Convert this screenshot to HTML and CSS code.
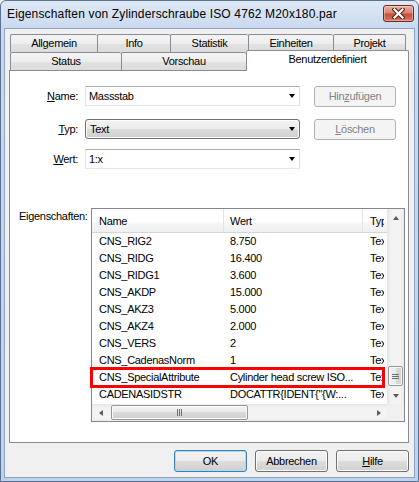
FILE: index.html
```html
<!DOCTYPE html>
<html>
<head>
<meta charset="utf-8">
<link rel="stylesheet" href="styles.css">
</head>
<body>
<div class="window">
  <div class="titlebar">
    <span class="title">Eigenschaften von Zylinderschraube ISO 4762 M20x180.par</span>
    <div class="close">
      <svg width="13" height="11" viewBox="0 0 13 11"><path d="M2.5 1.5 L10.5 9.5 M10.5 1.5 L2.5 9.5" stroke="#5a2318" stroke-width="4.2" stroke-linecap="square"/><path d="M2.5 1.5 L10.5 9.5 M10.5 1.5 L2.5 9.5" stroke="#ffffff" stroke-width="2.2" stroke-linecap="square"/></svg>
    </div>
  </div>
  <div class="client">
    <div class="tabctl">
      <div class="tabrow row1">
        <div class="tab w-allg">Allgemein</div>
        <div class="tab w-info">Info</div>
        <div class="tab w-stat">Statistik</div>
        <div class="tab w-einh">Einheiten</div>
        <div class="tab w-proj last">Projekt</div>
      </div>
      <div class="tabrow row2">
        <div class="tab w-status">Status</div>
        <div class="tab w-vors">Vorschau</div>
        <div class="tab w-ben selected">Benutzerdefiniert</div>
      </div>
      <div class="panel">
        <div class="frow r-name">
          <div class="flabel"><u>N</u>ame:</div>
          <div class="combo edit"><span class="ctext">Massstab</span><i class="arrow"></i></div>
          <div class="btn disabled side">Hin<u>z</u>ufügen</div>
        </div>
        <div class="frow r-typ">
          <div class="flabel"><u>T</u>yp:</div>
          <div class="combo list-style"><span class="ctext">Text</span><i class="arrow"></i></div>
          <div class="btn disabled side"><u>L</u>öschen</div>
        </div>
        <div class="frow r-wert">
          <div class="flabel"><u>W</u>ert:</div>
          <div class="combo edit"><span class="ctext">1:x</span><i class="arrow"></i></div>
        </div>
        <div class="props">
          <div class="plabel">Eigenschaften:</div>
          <div class="list">
            <div class="lmain">
              <div class="lhead">
                <div class="c1">Name</div>
                <div class="c2">Wert</div>
                <div class="c3">Typ</div>
              </div>
              <div class="lrow"><div class="c1">CNS_RIG2</div><div class="c2">8.750</div><div class="c3">Text</div></div>
              <div class="lrow"><div class="c1">CNS_RIDG</div><div class="c2">16.400</div><div class="c3">Text</div></div>
              <div class="lrow"><div class="c1">CNS_RIDG1</div><div class="c2">3.600</div><div class="c3">Text</div></div>
              <div class="lrow"><div class="c1">CNS_AKDP</div><div class="c2">15.000</div><div class="c3">Text</div></div>
              <div class="lrow"><div class="c1">CNS_AKZ3</div><div class="c2">5.000</div><div class="c3">Text</div></div>
              <div class="lrow"><div class="c1">CNS_AKZ4</div><div class="c2">2.000</div><div class="c3">Text</div></div>
              <div class="lrow"><div class="c1">CNS_VERS</div><div class="c2">2</div><div class="c3">Text</div></div>
              <div class="lrow"><div class="c1">CNS_CadenasNorm</div><div class="c2">1</div><div class="c3">Text</div></div>
              <div class="lrow"><div class="c1">CNS_SpecialAttribute</div><div class="c2">Cylinder head screw ISO...</div><div class="c3">Text</div></div>
              <div class="lrow"><div class="c1">CADENASIDSTR</div><div class="c2">DOCATTR{IDENT{"{W:...</div><div class="c3">Text</div></div>
            </div>
            <div class="vscroll">
              <div class="sbtn"><i class="tri up"></i></div>
              <div class="vtrack"><div class="vthumb"><i></i><i></i><i></i></div></div>
              <div class="sbtn"><i class="tri down"></i></div>
            </div>
            <div class="hscroll">
              <div class="sbtn"><i class="tri left"></i></div>
              <div class="htrack"><div class="hthumb"><i></i><i></i><i></i></div></div>
              <div class="sbtn"><i class="tri right"></i></div>
            </div>
            <div class="corner"></div>
            <div class="highlight"></div>
          </div>
        </div>
      </div>
    </div>
    <div class="bottom">
      <div class="btn default">OK</div>
      <div class="btn">Abbrechen</div>
      <div class="btn"><u>H</u>ilfe</div>
    </div>
  </div>
</div>
</body>
</html>
```
FILE: styles.css
```css
* { box-sizing: border-box; }
html, body { margin: 0; padding: 0; }
body {
  width: 419px; height: 482px; overflow: hidden; background: #ffffff;
  font-family: "Liberation Sans", Arial, sans-serif; font-size: 11px;
  letter-spacing: -0.3px; color: #000;
}
u { text-decoration: underline; text-underline-offset: 1px; }

.window {
  width: 419px; height: 482px;
  border: 1px solid #5b7192; border-radius: 6px 6px 0 0;
  background: linear-gradient(#dfe9f6, #c9d9ee 28px, #bfd2eb);
  display: flex; flex-direction: column;
}
.titlebar {
  height: 27px; flex: none;
  display: flex; justify-content: space-between; align-items: flex-start;
  padding: 0 4px 0 6px;
}
.title { font-size: 12px; letter-spacing: 0.15px; line-height: 15px; margin-top: 6px; color: #000; }
.close {
  width: 31px; height: 17px; margin-top: 4px;
  border: 1px solid #6d2a20; border-radius: 3px;
  background: linear-gradient(#eab0a3, #d98470 45%, #c8503a 55%, #d7755c);
  box-shadow: inset 0 0 0 1px rgba(255,255,255,0.35);
  display: flex; align-items: center; justify-content: center;
}
.close svg { display: block; }

.client {
  flex: 1; margin: 0 3px 3px 3px;
  border: 1px solid #8ea3bf; background: #f0f0f0;
  padding: 5px 5px 0 4px;
}
.tabctl { width: 400px; }
.tabrow { display: flex; height: 18px; padding-left: 1px; }
.row2 { align-items: flex-end; }
.tab {
  height: 18px; border: 1px solid #898c95; border-bottom: none; border-right: none;
  border-radius: 2px 2px 0 0;
  background: linear-gradient(#f4f4f4, #ededed 50%, #e2e2e2 50%, #dcdcdc);
  text-align: center; line-height: 17px; white-space: nowrap;
}
.tab.last { border-right: 1px solid #898c95; }
.w-allg { width: 87px; }
.w-info { width: 73px; }
.w-stat { width: 78px; }
.w-einh { width: 85px; }
.w-proj { width: 73px; }
.w-status { width: 111px; }
.w-vors { width: 125px; }
.tab.selected {
  width: 163px; height: 21px; margin-bottom: -1px;
  border-right: 1px solid #898c95; background: #ffffff;
  position: relative; z-index: 2; line-height: 17px;
}
.panel {
  height: 373px; border: 1px solid #898c95; background: #ffffff;
}

.frow { display: flex; align-items: flex-start; height: 20px; }
.r-name { margin-top: 15px; }
.r-typ { margin-top: 13px; }
.r-wert { margin-top: 10px; }
.flabel { width: 68px; text-align: right; line-height: 20px; }
.combo {
  width: 215px; height: 20px; margin-left: 7px;
  display: flex; align-items: center;
}
.combo.edit { border: 1px solid #abadb3; border-color: #abadb3 #dbdfe6 #e3e9ef #e2e3ea; background: #fff; }
.combo.list-style {
  border: 1px solid #707070; border-radius: 3px;
  background: linear-gradient(#f2f2f2, #ebebeb 50%, #dddddd 50%, #cfcfcf);
  box-shadow: inset 0 0 0 1px #fbfbfb;
}
.ctext { flex: 1; padding-left: 3px; line-height: 18px; }
.list-style .ctext { padding-left: 4px; }
.arrow {
  width: 0; height: 0; margin-right: 4px;
  border-left: 3.5px solid transparent; border-right: 3.5px solid transparent;
  border-top: 4px solid #000;
}
.btn {
  width: 73px; height: 22px;
  border: 1px solid #707070; border-radius: 3px;
  background: linear-gradient(#f2f2f2, #ebebeb 50%, #dddddd 50%, #cfcfcf);
  box-shadow: inset 0 0 0 1px #fcfcfc;
  text-align: center; line-height: 20px;
}
.btn.side { width: 82px; height: 21px; margin-left: 14px; line-height: 19px; }
.btn.disabled {
  border-color: #adb2b5; background: #f4f4f4; box-shadow: none; color: #838383;
}
.btn.default { border-color: #3c7fb1; box-shadow: inset 0 0 0 1px #a8dcf5; }

.props { display: flex; margin-top: 39px; }
.plabel { width: 81px; padding-left: 9px; padding-top: 2px; line-height: 13px; }
.list {
  width: 314px; height: 214px; position: relative;
  border: 1px solid #828790; background: #fff;
  display: grid; grid-template-columns: 295px 17px; grid-template-rows: 195px 17px;
}
.lmain { overflow: hidden; }
.lhead {
  height: 24px; display: flex;
  background: linear-gradient(#ffffff, #ffffff 55%, #f5f6f7 60%, #eeeff1);
  border-bottom: 1px solid #d5d5d5;
}
.lhead > div { padding-top: 2px; line-height: 21px; }
.lhead .c1, .lhead .c2 { border-right: 1px solid #e3e5e8; }
.c1, .c2, .c3 { white-space: nowrap; overflow: hidden; flex: none; }
.c1 { width: 132px; padding-left: 7px; }
.c2 { width: 139px; padding-left: 6px; }
.c3 { width: 21px; padding-left: 7px; }
.lrow { display: flex; height: 17px; line-height: 17px; }

.vscroll {
  grid-row: 1; grid-column: 2;
  display: flex; flex-direction: column;
  background: linear-gradient(to right, #e6e6e6, #f3f3f3 25%, #f3f3f3 80%, #ebebeb);
}
.sbtn { width: 17px; height: 17px; flex: none; display: flex; align-items: center; justify-content: center; }
.vtrack { flex: 1; }
.vthumb {
  width: 15px; height: 20px; margin: 140px 0 0 1px;
  border: 1px solid #979797; border-radius: 2px;
  background: linear-gradient(to right, #f3f3f3, #e9e9e9 50%, #dadada 50%, #d0d0d0);
  box-shadow: inset 0 0 0 1px #fafafa;
  display: flex; flex-direction: column; align-items: center; justify-content: center; gap: 1px;
}
.vthumb i { display: block; width: 7px; height: 1px; background: #6f6f6f; }
.hscroll {
  grid-row: 2; grid-column: 1;
  display: flex;
  background: linear-gradient(#e6e6e6, #f3f3f3 25%, #f3f3f3 80%, #ebebeb);
}
.htrack { flex: 1; }
.hthumb {
  width: 137px; height: 15px; margin: 1px 0 0 2px;
  border: 1px solid #979797; border-radius: 2px;
  background: linear-gradient(#f3f3f3, #e9e9e9 50%, #dadada 50%, #d0d0d0);
  box-shadow: inset 0 0 0 1px #fafafa;
  display: flex; align-items: center; justify-content: center; gap: 1px;
}
.hthumb i { display: block; width: 1px; height: 7px; background: #6f6f6f; }
.corner { grid-row: 2; grid-column: 2; background: #f0f0f0; }
.tri { width: 0; height: 0; display: block; }
.tri.up { border-left: 3.5px solid transparent; border-right: 3.5px solid transparent; border-bottom: 4px solid #5c5c5c; }
.tri.down { border-left: 3.5px solid transparent; border-right: 3.5px solid transparent; border-top: 4px solid #5c5c5c; }
.tri.left { border-top: 3.5px solid transparent; border-bottom: 3.5px solid transparent; border-right: 4px solid #5c5c5c; }
.tri.right { border-top: 3.5px solid transparent; border-bottom: 3.5px solid transparent; border-left: 4px solid #5c5c5c; }

.highlight {
  position: absolute; left: -2px; top: 158px;
  width: 295px; height: 21px;
  border: 3px solid #ff0000;
}

.bottom {
  display: flex; justify-content: flex-end; gap: 8px; margin-top: 7px;
}
```
